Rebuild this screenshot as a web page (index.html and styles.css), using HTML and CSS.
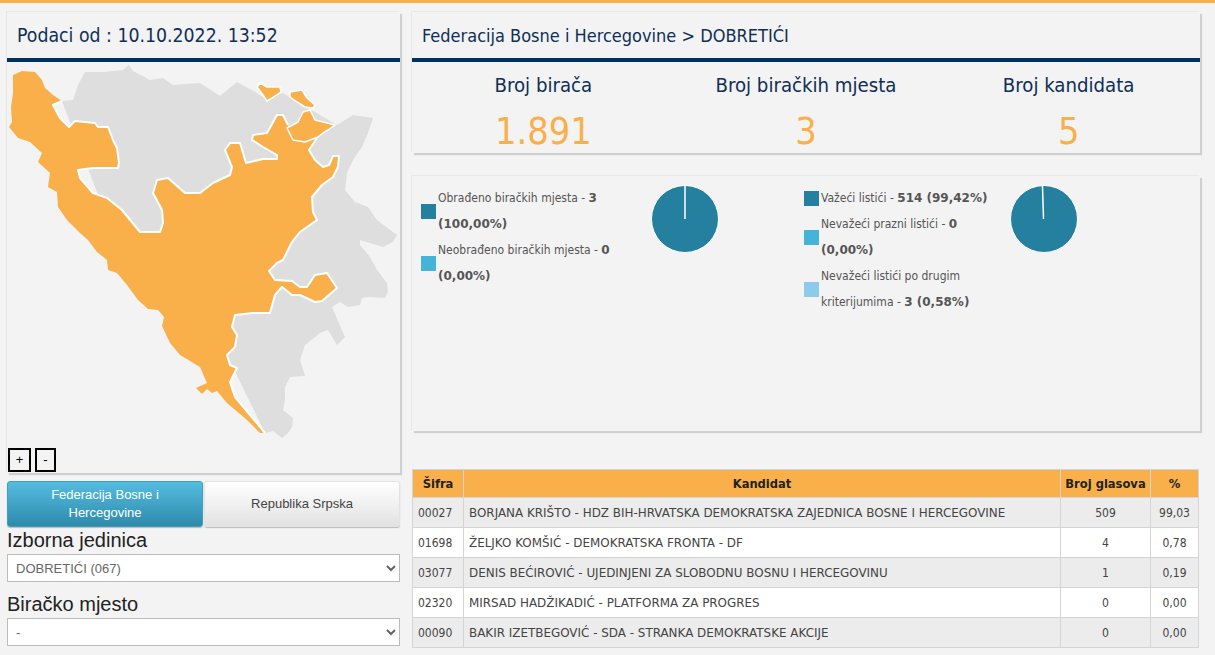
FILE: index.html
```html
<!DOCTYPE html>
<html lang="en">
<head>
    <meta charset="UTF-8">
    <meta name="viewport" content="width=device-width, initial-scale=1.0">
    <title>Izbori - Federacija Bosne i Hercegovine</title>
    <link rel="stylesheet" href="styles.css">
</head>
<body>
    <div class="page">
        <div class="left-col">
            <div class="panel map-panel">
                <div class="panel-title">Podaci od : 10.10.2022. 13:52</div>
                <div class="map-wrap">
                    <svg class="map" viewBox="7 62 393 411">
                        <path class="land" d="M62 101L73 100L78 85L85 72L103 72L123 70L129 65L133 71L150 80L163 78L173 85L200 83L220 96L237 82L257 93L267 100L283 93L307 108L315 112L337 125L353 115L373 118L368 133L362 147L353 160L347 173L345 190L355 202L368 207L377 220L397 235L393 242L383 247L360 240L360 245L370 257L377 270L387 283L388 292L385 298L370 297L362 298L360 305L348 307L340 302L332 307L345 337L337 345L328 330L320 333L305 345L300 360L305 376L290 377L285 387L285 400L283 410L293 418L292 427L288 433L282 438L273 431L265 433L200 300L100 200Z"/>
                        <path class="fed" d="M13 75L22 71L35 72L42 80L45 88L53 95L62 101L53 105L60 118L69 127L75 121L95 123L98 127L108 127L113 140L117 148L119 163L118 168L93 168L78 170L80 178L93 193L107 198L122 210L140 232L160 232L163 223L162 210L153 193L157 180L168 178L185 193L200 193L213 183L230 175L232 167L225 150L230 143L240 143L246 163L263 159L277 159L277 155L263 147L252 140L253 135L267 133L277 115L283 115L288 125L293 140L307 142L317 138L309 150L315 160L323 167L329 165L333 156L339 156L338 167L333 177L322 185L312 197L313 212L317 220L300 232L292 242L283 260L277 263L269 271L275 280L292 281L300 287L307 287L315 275L327 273L337 288L322 301L315 302L300 295L292 295L282 287L275 295L270 313L253 313L235 315L232 327L237 335L235 347L227 355L230 365L237 368L230 382L235 397L265 433L260 433L247 420L227 403L217 391L212 393L207 389L202 394L196 388L207 383L200 367L180 355L170 343L162 326L164 317L158 310L148 309L138 300L127 285L117 273L108 270L107 260L97 252L88 240L80 233L67 220L58 207L57 192L48 187L50 173L38 162L42 153L30 142L18 138L9 127L12 122L11 107L13 93Z"/>
                        <path class="fed fed-piece" d="M257 87L260 83L267 87L280 87L281 92L272 98L267 101L263 95Z"/>
                        <path class="fed fed-piece" d="M290 92L302 90L307 98L315 105L313 108L305 107L297 102L290 97Z"/>
                        <path class="fed fed-piece" d="M310 110L315 120L335 125L328 130L323 133L318 137L305 142L293 140L287 128L298 122L303 112Z"/>
                        <polyline class="border" points="62 101 53 105 60 118 69 127 75 121 95 123 98 127 108 127 113 140 117 148 119 163 118 168 93 168 78 170 80 178 93 193 107 198 122 210 140 232 160 232 163 223 162 210 153 193 157 180 168 178 185 193 200 193 213 183 230 175 232 167 225 150 230 143 240 143 246 163 263 159 277 159 277 155 263 147 252 140 253 135 267 133 277 115 283 115 288 125"/>
                        <polyline class="border" points="317 138 309 150 315 160 323 167 329 165 333 156 339 156 338 167 333 177 322 185 312 197 313 212 317 220 300 232 292 242 283 260 277 263 269 271 275 280 292 281 300 287 307 287 315 275 327 273 337 288 322 301 315 302 300 295 292 295 282 287 275 295 270 313 253 313 235 315 232 327 237 335 235 347 227 355 230 365 237 368 230 382 235 397 265 433"/>
                    </svg>
                    <div class="zoom-btns">
                        <span class="zoom-btn">+</span>
                        <span class="zoom-btn zoom-minus">-</span>
                    </div>
                </div>
            </div>

            <div class="tabs">
                <div class="tab active">Federacija Bosne i Hercegovine</div>
                <div class="tab">Republika Srpska</div>
            </div>

            <label class="field-label">Izborna jedinica</label>
            <select class="field-select">
                <option>DOBRETIĆI (067)</option>
            </select>

            <label class="field-label second">Biračko mjesto</label>
            <select class="field-select">
                <option>-</option>
            </select>
        </div>

        <div class="right-col">
            <div class="panel stats-panel">
                <div class="panel-title small">Federacija Bosne i Hercegovine &gt; DOBRETIĆI</div>
                <div class="stats">
                    <div class="stat">
                        <div class="stat-label">Broj birača</div>
                        <div class="stat-value">1.891</div>
                    </div>
                    <div class="stat">
                        <div class="stat-label">Broj biračkih mjesta</div>
                        <div class="stat-value">3</div>
                    </div>
                    <div class="stat">
                        <div class="stat-label">Broj kandidata</div>
                        <div class="stat-value">5</div>
                    </div>
                </div>
            </div>

            <div class="panel charts">
                <ul class="legend">
                    <li><span class="swatch dark"></span><span class="legend-text">Obrađeno biračkih mjesta - <b>3 (100,00%)</b></span></li>
                    <li><span class="swatch mid"></span><span class="legend-text">Neobrađeno biračkih mjesta - <b>0 (0,00%)</b></span></li>
                </ul>
                <svg class="pie" viewBox="0 0 68 68">
                    <circle cx="34" cy="34" r="33.5"/>
                    <line x1="34" y1="34" x2="34" y2="1"/>
                </svg>
                <ul class="legend">
                    <li><span class="swatch dark"></span><span class="legend-text">Važeći listići - <b>514 (99,42%)</b></span></li>
                    <li><span class="swatch mid"></span><span class="legend-text">Nevažeći prazni listići - <b>0 (0,00%)</b></span></li>
                    <li><span class="swatch light"></span><span class="legend-text">Nevažeći listići po drugim kriterijumima - <b>3 (0,58%)</b></span></li>
                </ul>
                <svg class="pie" viewBox="0 0 68 68">
                    <circle cx="34" cy="34" r="33.5"/>
                    <line x1="33.5" y1="34" x2="32.5" y2="1"/>
                </svg>
            </div>

            <table class="results">
                <colgroup>
                    <col class="col-code">
                    <col>
                    <col class="col-votes">
                    <col class="col-pct">
                </colgroup>
                <thead>
                    <tr>
                        <th>Šifra</th>
                        <th>Kandidat</th>
                        <th>Broj glasova</th>
                        <th>%</th>
                    </tr>
                </thead>
                <tbody>
                    <tr>
                        <td>00027</td>
                        <td class="name">BORJANA KRIŠTO - HDZ BIH-HRVATSKA DEMOKRATSKA ZAJEDNICA BOSNE I HERCEGOVINE</td>
                        <td class="num">509</td>
                        <td class="num">99,03</td>
                    </tr>
                    <tr>
                        <td>01698</td>
                        <td class="name">ŽELJKO KOMŠIĆ - DEMOKRATSKA FRONTA - DF</td>
                        <td class="num">4</td>
                        <td class="num">0,78</td>
                    </tr>
                    <tr>
                        <td>03077</td>
                        <td class="name">DENIS BEĆIROVIĆ - UJEDINJENI ZA SLOBODNU BOSNU I HERCEGOVINU</td>
                        <td class="num">1</td>
                        <td class="num">0,19</td>
                    </tr>
                    <tr>
                        <td>02320</td>
                        <td class="name">MIRSAD HADŽIKADIĆ - PLATFORMA ZA PROGRES</td>
                        <td class="num">0</td>
                        <td class="num">0,00</td>
                    </tr>
                    <tr>
                        <td>00090</td>
                        <td class="name">BAKIR IZETBEGOVIĆ - SDA - STRANKA DEMOKRATSKE AKCIJE</td>
                        <td class="num">0</td>
                        <td class="num">0,00</td>
                    </tr>
                </tbody>
            </table>
        </div>
    </div>
</body>
</html>
```

FILE: styles.css
```css
* {
    margin: 0;
    padding: 0;
    box-sizing: border-box;
}

html, body {
    height: 100%;
    overflow: hidden;
}

body {
    font-family: "DejaVu Sans Condensed", "DejaVu Sans", sans-serif;
    font-stretch: condensed;
    background: #f3f3f3;
    border-top: 3px solid #f9b04b;
}

.page {
    display: grid;
    grid-template-columns: 393px 788px;
    column-gap: 12px;
    padding: 9px 0 0 7px;
}

.panel {
    background: #f3f3f3;
    box-shadow: -1px -1px 0 #e8e8e8, 2px 2px 1px #d0d0d0;
}

.panel-title {
    height: 50px;
    padding: 10px 0 0 10px;
    font-size: 19.3px;
    line-height: 28px;
    color: #0f2f57;
    border-bottom: 4px solid #03315f;
}

.panel-title.small {
    font-size: 18px;
}

/* map */
.map-panel {
    height: 461px;
}

.map-wrap {
    position: relative;
}

.map {
    display: block;
    width: 393px;
    height: 411px;
}

.land {
    fill: #dedede;
}

.fed {
    fill: #f9b04b;
}

.fed-piece {
    stroke: #fff;
    stroke-width: 1.5;
    stroke-linejoin: round;
}

.border {
    fill: none;
    stroke: #fff;
    stroke-width: 2;
    stroke-linejoin: round;
}

.zoom-btns {
    position: absolute;
    left: 1px;
    bottom: 1px;
    display: flex;
    gap: 4px;
}

.zoom-btn {
    width: 23px;
    height: 24px;
    border: 2px solid #000;
    font-family: "Liberation Sans", sans-serif;
    font-size: 13px;
    line-height: 19px;
    text-align: center;
    color: #000;
}

.zoom-minus {
    width: 21px;
}

/* left column controls */
.tabs {
    display: flex;
    margin-top: 8px;
    gap: 1px;
}

.tab {
    flex: 1;
    height: 46px;
    display: flex;
    align-items: center;
    justify-content: center;
    text-align: center;
    padding: 0 30px;
    font-family: "Liberation Sans", sans-serif;
    font-stretch: normal;
    font-size: 13px;
    line-height: 18px;
    color: #444;
    border: 1px solid #e2e2e2;
    border-radius: 3px;
    background: linear-gradient(#fff, #e2e2e2);
    box-shadow: 0 1px 1px #bbb;
}

.tab.active {
    color: #fff;
    border-color: #3f9fc0;
    background: linear-gradient(#55bde0, #2e8aab);
}

.field-label {
    display: block;
    margin: 2px 0;
    font-family: "Liberation Sans", sans-serif;
    font-stretch: normal;
    font-size: 20px;
    line-height: 23px;
    color: #222;
}

.field-label.second {
    margin-top: 11px;
}

.field-select {
    display: block;
    width: 393px;
    height: 28px;
    padding-left: 4px;
    background: #fff;
    border: 1px solid #bbb;
    font-family: "Liberation Sans", sans-serif;
    font-size: 13px;
    color: #666;
}

/* stats */
.stats-panel {
    height: 141px;
}

.stats {
    display: grid;
    grid-template-columns: repeat(3, 1fr);
    text-align: center;
}

.stat-label {
    margin-top: 9px;
    font-size: 20.2px;
    line-height: 28px;
    color: #0f2f57;
}

.stat-value {
    margin-top: 7px;
    font-size: 37.6px;
    line-height: 50px;
    color: #f9b04b;
}

/* charts */
.charts {
    display: grid;
    grid-template-columns: 230px 153px 206px 1fr;
    align-items: start;
    height: 255px;
    margin-top: 23px;
    padding: 9px 0 0 9px;
}

.legend {
    list-style: none;
    font-size: 12px;
    line-height: 26px;
    color: #555;
}

.legend li {
    display: flex;
    align-items: center;
    gap: 2px;
}

.legend-text {
    width: 178px;
}

.legend b {
    font-family: "DejaVu Sans", sans-serif;
    font-stretch: normal;
}

.swatch {
    flex: none;
    width: 15px;
    height: 15px;
}

.dark {
    background: #24809e;
}

.mid {
    background: #45b4d8;
}

.light {
    background: #8ccbec;
}

.pie {
    display: block;
    width: 68px;
    height: 68px;
    overflow: visible;
}

.pie circle {
    fill: #24809e;
    stroke: #fff;
    stroke-width: 1;
}

.pie line {
    stroke: #fff;
    stroke-width: 1.5;
}

/* results table */
.results {
    width: 787px;
    margin-top: 38px;
    border-collapse: collapse;
    table-layout: fixed;
    font-size: 12px;
    color: #444;
}

.col-code {
    width: 51px;
}

.col-votes {
    width: 90px;
}

.col-pct {
    width: 48px;
}

.results th,
.results td {
    border: 1px solid #d4d4d4;
}

.results th {
    height: 28px;
    background: #f9b04b;
    font-size: 12.8px;
    font-weight: bold;
    color: #222;
    text-align: center;
}

.results td {
    height: 30px;
    padding: 0 5px;
}

.results td.name {
    font-family: "DejaVu Sans", sans-serif;
    font-stretch: normal;
    font-size: 11.93px;
}

.results td.num {
    text-align: center;
}

.results tbody tr:nth-child(odd) td {
    background: #ececec;
}

.results tbody tr:nth-child(even) td {
    background: #fff;
}
```
